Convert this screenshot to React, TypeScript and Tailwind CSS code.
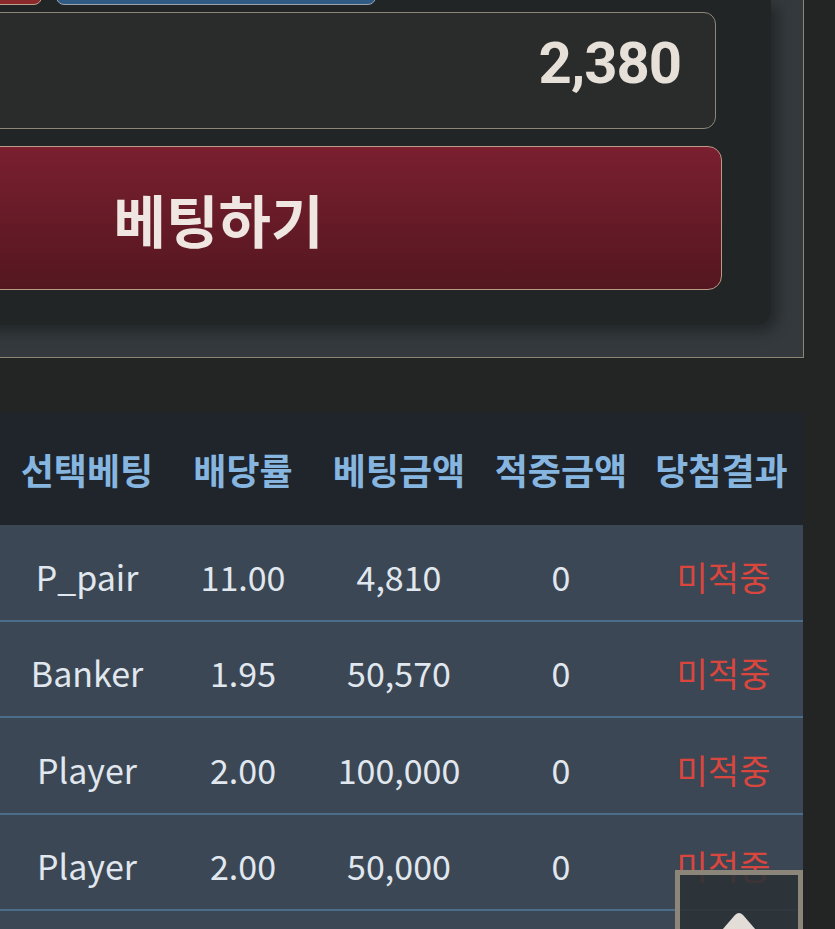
import React from 'react';

const rows = [
  { pick: 'P_pair', odds: '11.00', bet: '4,810', win: '0', result: '미적중' },
  { pick: 'Banker', odds: '1.95', bet: '50,570', win: '0', result: '미적중' },
  { pick: 'Player', odds: '2.00', bet: '100,000', win: '0', result: '미적중' },
  { pick: 'Player', odds: '2.00', bet: '50,000', win: '0', result: '미적중' },
];

const cols = 'grid grid-cols-[174px_138px_174px_150px_1fr] items-center text-center';

export default function App() {
  return (
    <div
      className="relative w-[835px] h-[929px] overflow-hidden bg-[#232525]"
      style={{ fontFamily: '"Noto Sans CJK KR", "Noto Sans", sans-serif' }}
    >
      {/* bet panel */}
      <div className="ml-[-285px] w-[1089px] border-r border-b border-[#8c8572] bg-[#33393c] pr-[32px] pb-[32px]">
        <div className="rounded-br-[16px] bg-[#222525] pr-[49px] pb-[35px] shadow-[6px_6px_14px_rgba(0,0,0,0.35)]">
          <div className="flex h-[5px] items-end gap-[14px] overflow-hidden pl-[225px]">
            <div className="h-[44px] w-[102px] rounded-[8px] border border-[#b9a58c] bg-[#8a2a2a]" />
            <div className="h-[44px] w-[320px] rounded-[8px] border border-[#9aa3ab] bg-[#2f5a84]" />
          </div>
          <div className="mt-[7px] mr-[6px] flex h-[117px] items-center justify-end rounded-[12px] border border-[#8d877a] bg-[#2a2b2b] pr-[34px] pb-[16px]">
            <span
              className="text-[58px] font-bold leading-none tracking-[-1px] text-[#e6e0d8]"
              style={{ fontFamily: 'Roboto, "Liberation Sans", sans-serif' }}
            >
              2,380
            </span>
          </div>
          <button className="mt-[17px] flex h-[144px] w-full items-center justify-center rounded-[14px] border border-[#b89a86] bg-gradient-to-b from-[#7a1f2f] to-[#541720]">
            <span className="text-[57px] font-bold leading-none text-[#efe6e2]">베팅하기</span>
          </button>
        </div>
      </div>

      {/* history table */}
      <div className="mt-[54px] w-[803px]">
        <div className={`${cols} h-[113px] bg-[#1f252b] text-[36px] font-bold text-[#86b5e0]`}>
          <span>선택베팅</span>
          <span>배당률</span>
          <span>베팅금액</span>
          <span>적중금액</span>
          <span className="pl-[4px]">당첨결과</span>
        </div>
        {rows.map((r, i) => (
          <div
            key={i}
            className={`${cols} h-[96.5px] border-b-2 border-[#4b6d89] bg-[#3b4754] pt-[8px] text-[34px] text-[#e1e7ee]`}
          >
            <span>{r.pick}</span>
            <span>{r.odds}</span>
            <span>{r.bet}</span>
            <span>{r.win}</span>
            <span className="pl-[8px] text-[#d9463e]">{r.result}</span>
          </div>
        ))}
        <div className="h-[40px] bg-[#3b4754]" />
      </div>

      {/* scroll to top */}
      <button className="absolute left-[675px] top-[870px] flex h-[90px] w-[128px] justify-center border-[5px] border-[#8b857a] bg-[#2c3236]/90 pt-[36px]">
        <svg width="64" height="40" viewBox="0 0 64 40">
          <path d="M28 4 Q32 0 36 4 L62 34 Q64 38 58 38 L6 38 Q0 38 2 34 Z" fill="#e2ddd6" />
        </svg>
      </button>
    </div>
  );
}
